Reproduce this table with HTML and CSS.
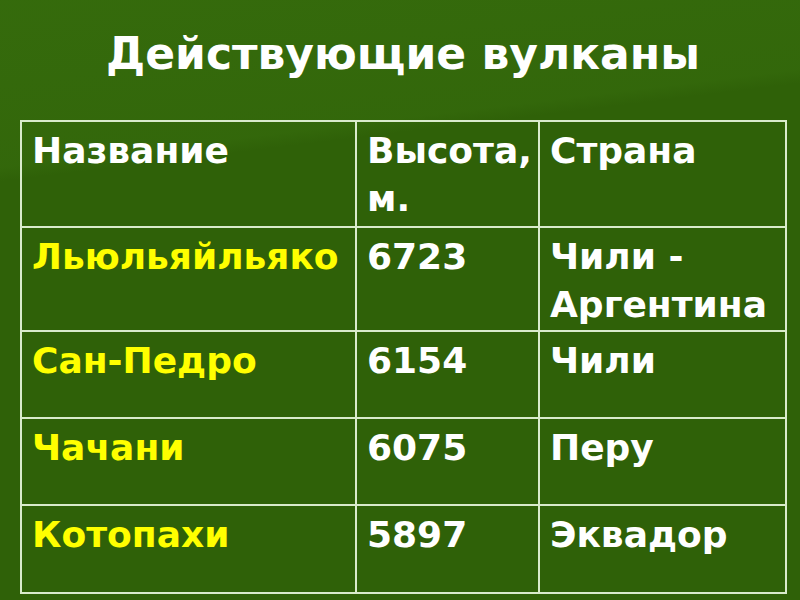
FILE: index.html
```html
<!DOCTYPE html>
<html lang="ru">
<head>
<meta charset="utf-8">
<title>Действующие вулканы</title>
<link rel="stylesheet" href="styles.css">
</head>
<body>
<div class="slide">
  <h1 class="title">Действующие вулканы</h1>
  <table class="volcanoes">
    <colgroup>
      <col class="c-name">
      <col class="c-height">
      <col class="c-country">
    </colgroup>
    <tr class="r-head">
      <td>Название</td>
      <td>Высота, м.</td>
      <td>Страна</td>
    </tr>
    <tr class="r-two">
      <td class="name">Льюльяйльяко</td>
      <td>6723</td>
      <td>Чили - Аргентина</td>
    </tr>
    <tr class="r-one">
      <td class="name">Сан-Педро</td>
      <td>6154</td>
      <td>Чили</td>
    </tr>
    <tr class="r-one">
      <td class="name">Чачани</td>
      <td>6075</td>
      <td>Перу</td>
    </tr>
    <tr class="r-last">
      <td class="name">Котопахи</td>
      <td>5897</td>
      <td>Эквадор</td>
    </tr>
  </table>
</div>
</body>
</html>
```

FILE: styles.css
```css
html, body {
  margin: 0;
  padding: 0;
}
body {
  width: 800px;
  height: 600px;
  overflow: hidden;
  font-family: "DejaVu Sans", Verdana, sans-serif;
  font-weight: bold;
}
.slide {
  width: 800px;
  height: 600px;
  box-sizing: border-box;
  padding: 0 14px 0 20px;
  background:
    linear-gradient(173deg, rgba(80, 150, 30, 0.18) 0%, rgba(80, 150, 30, 0.12) 24%, rgba(0, 0, 0, 0) 26%),
    #2f6108;
}
.title {
  margin: 0;
  padding-top: 26px;
  height: 96px;
  box-sizing: border-box;
  text-align: center;
  color: #ffffff;
  font-size: 44px;
  line-height: 56px;
  font-weight: bold;
}
.volcanoes {
  width: 767px;
  border-collapse: collapse;
  margin-top: 24px;
  color: #ffffff;
  font-size: 36px;
  line-height: 48px;
}
.c-name { width: 335px; }
.c-height { width: 183px; }
.volcanoes td {
  border: 2px solid #d9ebcc;
  vertical-align: top;
  padding: 5px 4px 0 10px;
  box-sizing: border-box;
}
.volcanoes .name {
  color: #ffff00;
}
.r-head td { height: 106px; }
.r-two td { height: 104px; }
.r-one td { height: 87px; }
.r-last td { height: 88px; }
```
